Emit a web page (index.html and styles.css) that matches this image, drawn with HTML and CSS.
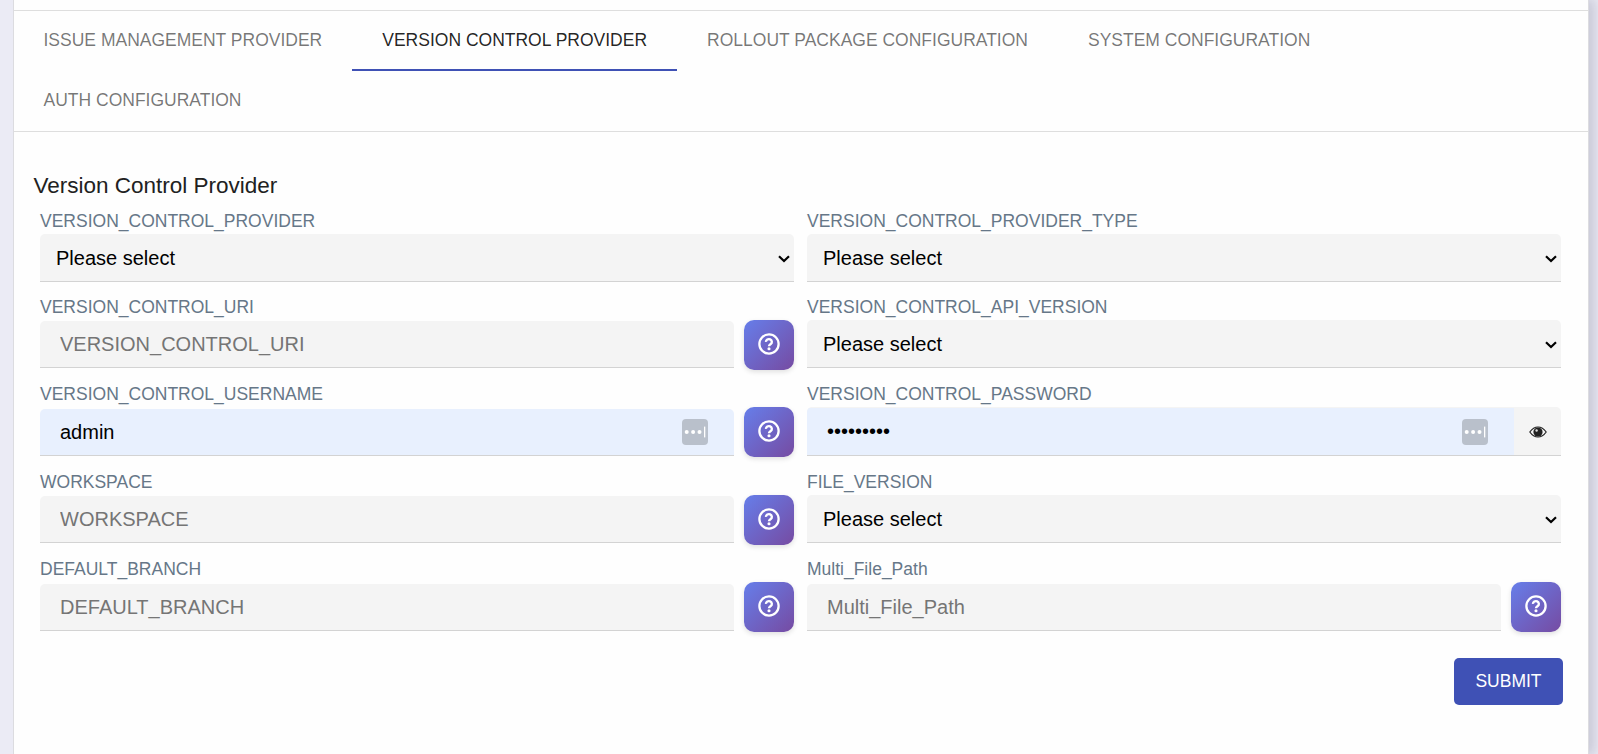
FILE: index.html
```html
<!DOCTYPE html>
<html lang="en">
<head>
<meta charset="utf-8">
<title>Version Control Provider</title>
<link rel="stylesheet" href="styles.css">
</head>
<body>
<svg class="defs" width="0" height="0">
  <symbol id="help" viewBox="0 0 24 24"><circle cx="12" cy="12" r="10.500" fill="none" stroke="currentColor" stroke-width="2.500"/><path d="M8.700 9.700a3.200 3 0 1 1 5.200 2.300c-1.100.8-1.900 1.200-1.900 2.500" fill="none" stroke="currentColor" stroke-width="2.600"/><circle cx="12" cy="17.200" r="1.700" fill="currentColor"/></symbol>
  <symbol id="chevron" viewBox="0 0 12 8"><path d="M1 1.200 6 6l5-4.800" fill="none" stroke="#000" stroke-width="2.200"/></symbol>
  <symbol id="key" viewBox="0 0 26 26"><rect width="26" height="26" rx="4" fill="#b9c0cb"/><g fill="#fff"><circle cx="4.700" cy="13" r="2"/><circle cx="11.100" cy="13" r="2"/><circle cx="17.500" cy="13" r="2"/><rect x="22" y="7.600" width="1.300" height="10.800"/></g></symbol>
</svg>
<main class="card">
  <nav class="tabs">
    <a class="tab">ISSUE MANAGEMENT PROVIDER</a>
    <a class="tab active">VERSION CONTROL PROVIDER</a>
    <a class="tab">ROLLOUT PACKAGE CONFIGURATION</a>
    <a class="tab">SYSTEM CONFIGURATION</a>
    <a class="tab">AUTH CONFIGURATION</a>
  </nav>
  <form class="form">
    <h1 class="title">Version Control Provider</h1>
    <div class="grid">
      <div class="field"><label class="label">VERSION_CONTROL_PROVIDER</label>
        <div class="control"><select class="box select"><option>Please select</option></select><svg class="chevron"><use href="#chevron"/></svg></div></div>
      <div class="field"><label class="label">VERSION_CONTROL_PROVIDER_TYPE</label>
        <div class="control"><select class="box select"><option>Please select</option></select><svg class="chevron"><use href="#chevron"/></svg></div></div>

      <div class="field"><label class="label">VERSION_CONTROL_URI</label>
        <div class="control"><input class="box input" placeholder="VERSION_CONTROL_URI"><button type="button" class="help"><svg class="help-icon"><use href="#help"/></svg></button></div></div>
      <div class="field"><label class="label">VERSION_CONTROL_API_VERSION</label>
        <div class="control"><select class="box select"><option>Please select</option></select><svg class="chevron"><use href="#chevron"/></svg></div></div>

      <div class="field"><label class="label">VERSION_CONTROL_USERNAME</label>
        <div class="control"><input class="box input low filled" value="admin"><svg class="key key-user"><use href="#key"/></svg><button type="button" class="help"><svg class="help-icon"><use href="#help"/></svg></button></div></div>
      <div class="field"><label class="label">VERSION_CONTROL_PASSWORD</label>
        <div class="control"><div class="box password"><input class="secret" value="•••••••••"><span class="eye"><svg width="18" height="12" viewBox="0 0 18 12"><path d="M.8 6C3.200 2.600 5.800 1 9 1s5.800 1.600 8.200 5C14.800 9.400 12.200 11 9 11S3.200 9.400.8 6Z" fill="#f4f4f4" stroke="#222" stroke-width="1.200"/><circle cx="9" cy="6" r="4.600" fill="#222"/><circle cx="7.600" cy="4.500" r="1.200" fill="#ddd"/></svg></span></div><svg class="key key-pass"><use href="#key"/></svg></div></div>

      <div class="field"><label class="label">WORKSPACE</label>
        <div class="control"><input class="box input" placeholder="WORKSPACE"><button type="button" class="help"><svg class="help-icon"><use href="#help"/></svg></button></div></div>
      <div class="field"><label class="label">FILE_VERSION</label>
        <div class="control"><select class="box select"><option>Please select</option></select><svg class="chevron"><use href="#chevron"/></svg></div></div>

      <div class="field"><label class="label">DEFAULT_BRANCH</label>
        <div class="control"><input class="box input low" placeholder="DEFAULT_BRANCH"><button type="button" class="help"><svg class="help-icon"><use href="#help"/></svg></button></div></div>
      <div class="field"><label class="label">Multi_File_Path</label>
        <div class="control"><input class="box input low" placeholder="Multi_File_Path"><button type="button" class="help"><svg class="help-icon"><use href="#help"/></svg></button></div></div>
    </div>
    <div class="actions"><button type="button" class="submit">SUBMIT</button></div>
  </form>
</main>
</body>
</html>
```
FILE: styles.css
```css
* { box-sizing: border-box; }
body {
  margin: 0;
  height: 754px;
  overflow: hidden;
  background: #ebebf5;
  font-family: "Liberation Sans", Arial, sans-serif;
}
.defs { position: absolute; }
.card {
  height: 754px;
  margin: 0 9px 0 13px;
  padding-top: 10px;
  background: #fefefe;
  border: solid #dcdce0;
  border-width: 0 1px;
  box-shadow: 4px 0 12px 2px rgba(60, 60, 90, .2);
  clip-path: inset(0 -9px 0 0);
}
.tabs {
  display: flex;
  flex-wrap: wrap;
  height: 122px;
  border: solid #dedede;
  border-width: 1px 0;
}
.tab {
  height: 60px;
  padding: 0 30px;
  font-size: 17.5px;
  line-height: 58px;
  color: rgba(0, 0, 0, .54);
  border-bottom: 2px solid transparent;
}
.tab:first-child, .tab:last-child { padding-left: 29.5px; }
.tab.active { color: rgba(0, 0, 0, .87); border-color: #3f51b5; }
.form { padding: 41px 26px 0; }
.title {
  margin: 0 0 12px -6.5px;
  font-size: 22.5px;
  font-weight: 400;
  line-height: 26px;
  color: #212121;
}
.grid {
  display: grid;
  grid-template-columns: 754px 754px;
  grid-template-rows: 86px 87px 88px 87px 73px;
  column-gap: 13px;
}
.label {
  display: block;
  height: 23px;
  font-size: 17.5px;
  line-height: 20px;
  color: #667788;
}
.control {
  position: relative;
  display: flex;
  align-items: flex-start;
  gap: 10px;
}
.box {
  flex: 1;
  min-width: 0;
  margin: 0;
  border: 0;
  border-bottom: 1px solid #d3d3d3;
  border-radius: 5px 5px 0 0;
  background: #f4f4f4;
  font: 20px "Liberation Sans", Arial, sans-serif;
  color: #000;
}
.select { height: 48px; padding: 0 16px; appearance: none; }
.input { height: 47px; margin-top: 1px; padding: 0 20px; }
.input::placeholder { color: #757575; }
.low { margin-top: 2px; }
.filled { background: #e8f0fe; }
.chevron {
  position: absolute;
  right: 4px;
  top: 21px;
  width: 12px;
  height: 8px;
}
.help {
  display: grid;
  place-items: center;
  width: 50px;
  height: 50px;
  padding: 0 0 2px;
  border: 0;
  border-radius: 10px;
  background: linear-gradient(135deg, #667eea, #764ba2);
  box-shadow: 0 2px 5px rgba(0, 0, 0, .12);
  color: #fff;
}
.help-icon { width: 22px; height: 22px; }
.key { position: absolute; width: 26px; height: 26px; }
.key-user { left: 642px; top: 12px; }
.key-pass { left: 654.5px; top: 12px; }
.password { display: flex; height: 49px; overflow: hidden; }
.secret {
  width: 707px;
  margin-top: 1px;
  padding: 0 20px;
  border: 0;
  background: #e8f0fe;
  font: 20px "Liberation Sans", Arial, sans-serif;
}
.eye { display: grid; place-items: center; width: 47px; padding-top: 1px; }
.actions { display: flex; justify-content: flex-end; margin: 26px -1px 0 0; }
.submit {
  width: 109px;
  height: 47px;
  padding: 0;
  border: 0;
  border-radius: 5px;
  background: #3f51b5;
  color: #fff;
  font: 17.5px "Liberation Sans", Arial, sans-serif;
}
```
